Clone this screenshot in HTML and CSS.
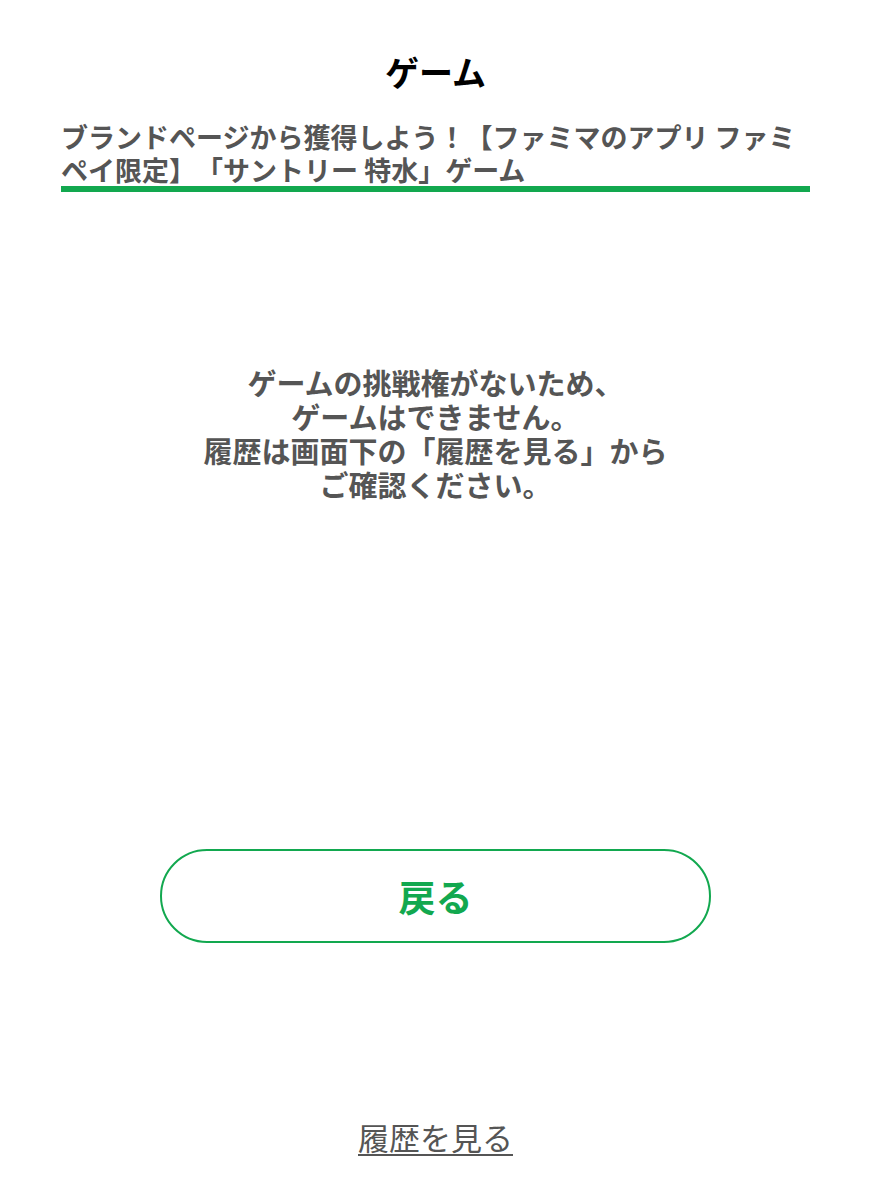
FILE: index.html
```html
<!DOCTYPE html>
<html lang="ja">
<head>
<meta charset="utf-8">
<title>ゲーム</title>
<link rel="stylesheet" href="styles.css">
</head>
<body>
<div class="page">
  <h1 class="title">ゲーム</h1>
  <h2 class="subtitle">ブランドページから獲得しよう！【ファミマのアプリ ファミペイ限定】「サントリー 特水」ゲーム</h2>
  <p class="message">ゲームの挑戦権がないため、<br>ゲームはできません。<br>履歴は画面下の「履歴を見る」から<br>ご確認ください。</p>
  <div class="actions">
    <button class="back-btn" type="button">戻る</button>
  </div>
  <div class="footer">
    <a class="history-link" href="#">履歴を見る</a>
  </div>
</div>
</body>
</html>
```
FILE: styles.css
```css
* {
  box-sizing: border-box;
}
html, body {
  margin: 0;
  padding: 0;
  background: #ffffff;
}
body {
  font-family: "Noto Sans CJK JP", "Noto Sans", sans-serif;
  color: #555555;
  text-spacing-trim: space-all;
}
.page {
  width: 871px;
  padding: 0 61px;
  display: flex;
  flex-direction: column;
}
.title {
  margin: 52px 0 0;
  font-size: 34px;
  line-height: 40px;
  font-weight: 700;
  color: #000000;
  text-align: center;
}
.subtitle {
  margin: 28px 0 0;
  font-size: 27px;
  line-height: 33px;
  font-weight: 700;
  color: #555555;
  border-bottom: 6px solid #12a84f;
}
.message {
  margin: 173px 0 0;
  font-size: 29px;
  line-height: 34px;
  font-weight: 700;
  color: #555555;
  text-align: center;
}
.actions {
  margin-top: 348px;
  display: flex;
  justify-content: center;
}
.back-btn {
  width: 551px;
  height: 94px;
  border: 2px solid #12a84f;
  border-radius: 47px;
  background: #ffffff;
  color: #12a84f;
  font-family: "Noto Sans CJK JP", "Noto Sans", sans-serif;
  font-size: 37px;
  font-weight: 700;
  line-height: 1;
  padding: 0;
}
.footer {
  margin-top: 174px;
  display: flex;
  justify-content: center;
}
.history-link {
  font-size: 31px;
  line-height: 40px;
  color: #555555;
  text-decoration: underline;
  text-underline-offset: 4px;
  text-decoration-thickness: 2px;
}
```
